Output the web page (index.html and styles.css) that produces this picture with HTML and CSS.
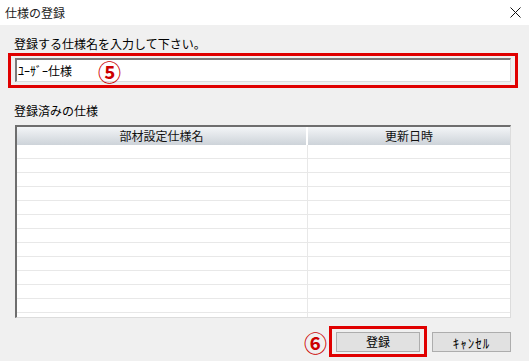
FILE: index.html
```html
<!DOCTYPE html>
<html lang="ja">
<head>
    <meta charset="UTF-8">
    <title>仕様の登録</title>
    <link rel="stylesheet" href="styles.css">
</head>
<body>
    <div class="window">
        <div class="titlebar">
            <span class="title">仕様の登録</span>
            <svg class="close" width="11" height="11" viewBox="0 0 11 11">
                <path d="M0.5 0.5 L10.5 10.5 M10.5 0.5 L0.5 10.5" stroke="#111" stroke-width="1" fill="none"/>
            </svg>
        </div>

        <div class="content">
            <div class="label">登録する仕様名を入力して下さい。</div>
            <div class="mark name-mark">
                <div class="input">ﾕｰｻﾞｰ仕様<span class="num">⑤</span></div>
            </div>

            <div class="label list-label">登録済みの仕様</div>
            <div class="grid">
                <div class="grid-head">
                    <div class="col-name">部材設定仕様名</div>
                    <div class="col-date">更新日時</div>
                </div>
                <div class="grid-body">
                    <div class="row"><div class="col-name"></div><div class="col-date"></div></div>
                    <div class="row"><div class="col-name"></div><div class="col-date"></div></div>
                    <div class="row"><div class="col-name"></div><div class="col-date"></div></div>
                    <div class="row"><div class="col-name"></div><div class="col-date"></div></div>
                    <div class="row"><div class="col-name"></div><div class="col-date"></div></div>
                    <div class="row"><div class="col-name"></div><div class="col-date"></div></div>
                    <div class="row"><div class="col-name"></div><div class="col-date"></div></div>
                    <div class="row"><div class="col-name"></div><div class="col-date"></div></div>
                    <div class="row"><div class="col-name"></div><div class="col-date"></div></div>
                    <div class="row"><div class="col-name"></div><div class="col-date"></div></div>
                    <div class="row"><div class="col-name"></div><div class="col-date"></div></div>
                    <div class="row"><div class="col-name"></div><div class="col-date"></div></div>
                    <div class="row"><div class="col-name"></div><div class="col-date"></div></div>
                </div>
            </div>

            <div class="footer">
                <span class="num">⑥</span>
                <div class="mark btn-mark">
                    <button type="button" class="btn">登録</button>
                </div>
                <button type="button" class="btn cancel">ｷｬﾝｾﾙ</button>
            </div>
        </div>
    </div>
</body>
</html>
```

FILE: styles.css
```css
* {
    box-sizing: border-box;
}

body {
    margin: 0;
    background: #fff;
    font-family: "Noto Sans CJK JP", sans-serif;
    font-size: 12px;
    color: #000;
}

.window {
    width: 531px;
    height: 362px;
    display: flex;
    flex-direction: column;
}

.titlebar {
    height: 25px;
    display: flex;
    align-items: center;
    justify-content: space-between;
    padding: 0 10px 0 5px;
    background: #fff;
}

.title {
    font-size: 12px;
    color: #222;
}

.content {
    width: 529px;
    height: 336px;
    background: #f0f0f0;
    padding: 11px 0 0 8px;
    display: flex;
    flex-direction: column;
}

.label {
    height: 16px;
    line-height: 16px;
    padding-left: 6px;
    font-size: 12px;
}

.mark {
    border: 3px solid #e00000;
}

.name-mark {
    width: 510px;
    height: 35px;
    margin-top: 1px;
    padding: 2px 4px 0 4px;
}

.input {
    width: 496px;
    height: 24px;
    background: #fff;
    border-top: 2px solid #7a7a7a;
    border-left: 2px solid #7a7a7a;
    border-right: 1px solid #dcdcdc;
    border-bottom: 1px solid #dcdcdc;
    padding-left: 1px;
    line-height: 20px;
    display: flex;
    align-items: center;
}

.num {
    color: #cc0000;
    font-size: 23px;
    font-weight: bold;
    line-height: 20px;
}

.input .num {
    margin-left: 26px;
}

.list-label {
    margin-top: 15px;
}

.grid {
    width: 496px;
    height: 193px;
    margin: 6px 0 0 7px;
    background: #fff;
    border-top: 2px solid #6e6e6e;
    border-left: 2px solid #6e6e6e;
    border-right: 1px solid #dcdcdc;
    border-bottom: 1px solid #dcdcdc;
    overflow: hidden;
}

.grid-head {
    display: flex;
    height: 18px;
    background: linear-gradient(#f3f5f7, #cdd3d9);
}

.grid-head > div {
    line-height: 18px;
    text-align: center;
    font-size: 12px;
    color: #111;
}

.col-name {
    width: 291px;
    border-right: 1px solid #f2f2f2;
}

.col-date {
    flex: 1;
}

.grid-head .col-name {
    border-right: 2px solid #fff;
}

.row {
    display: flex;
    height: 14px;
    border-bottom: 1px solid #e8e8e8;
}

.row .col-name {
    border-right: 1px solid #e8e8e8;
}

.footer {
    display: flex;
    align-items: center;
    justify-content: flex-end;
    width: 503px;
    margin-top: 8px;
}

.footer .num {
    margin-right: 2px;
}

.btn-mark {
    width: 98px;
    height: 31px;
    padding: 0 4px;
    display: flex;
    align-items: center;
}

.btn {
    width: 84px;
    height: 20px;
    padding: 0;
    background: #e1e1e1;
    border: 1px solid #adadad;
    font-family: "Noto Sans CJK JP", sans-serif;
    font-size: 12px;
    color: #000;
}

.cancel {
    width: 79px;
    margin-left: 5px;
    font-size: 13px;
    letter-spacing: 1px;
}
```
